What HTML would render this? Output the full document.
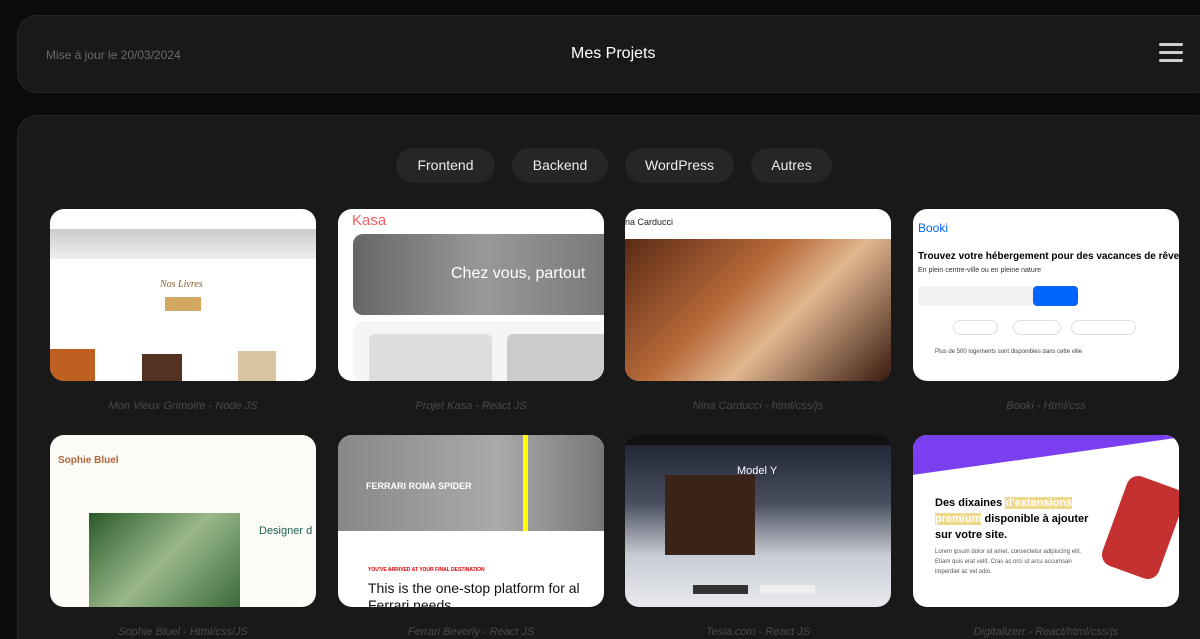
<!DOCTYPE html>
<html style="overflow:hidden;height:639px"><head><meta charset="utf-8"><style>
*{margin:0;padding:0;box-sizing:border-box}
body{width:1200px;height:639px;overflow:hidden;background:#0b0b0b;font-family:"Liberation Sans",sans-serif;position:relative}
.hdr{position:absolute;left:17px;top:15px;width:1200px;height:78px;background:#191919;border:1px solid #262626;border-radius:20px}
.hdr .d{position:absolute;left:28px;top:32px;color:#6a6a6a;font-size:12px}
.hdr .t{position:absolute;left:553px;top:29px;color:#fff;font-size:16px}
.burger{position:absolute;left:1159px;top:43px;width:24px}
.burger i{display:block;height:3px;background:#cfcfcf;border-radius:2px;margin-bottom:5px}
.main{position:absolute;left:17px;top:115px;width:1200px;height:540px;background:#191919;border:1px solid #262626;border-radius:20px}
.pill{position:absolute;top:148px;height:35px;background:#262626;border-radius:18px;color:#eee;font-size:14px;line-height:35px;text-align:center}
.card{position:absolute;width:266px;height:172px;border-radius:14px;overflow:hidden;background:#fff}
.cap{position:absolute;width:266px;text-align:center;color:#4a4a4a;font-size:11px;font-style:italic}
.a{position:absolute}
</style></head><body>
<div class="hdr"><div class="d">Mise à jour le 20/03/2024</div><div class="t">Mes Projets</div></div>
<div class="burger"><i></i><i></i><i></i></div>
<div class="main"></div>
<div class="pill" style="left:396px;width:99px">Frontend</div>
<div class="pill" style="left:512px;width:96px">Backend</div>
<div class="pill" style="left:625px;width:109px">WordPress</div>
<div class="pill" style="left:751px;width:81px">Autres</div>

<div class="card" style="left:50px;top:209px">
 <div class="a" style="top:20px;left:0;width:266px;height:30px;background:linear-gradient(#ccc,#eee)"></div>
 <div class="a" style="top:70px;left:110px;font-family:'Liberation Serif';font-style:italic;color:#8a5a2a;font-size:10px">Nos Livres</div>
 <div class="a" style="top:88px;left:115px;width:36px;height:14px;background:#d4a860"></div>
 <div class="a" style="top:140px;left:0;width:45px;height:32px;background:#c06020"></div>
 <div class="a" style="top:145px;left:92px;width:40px;height:27px;background:#553322"></div>
 <div class="a" style="top:142px;left:188px;width:38px;height:30px;background:#d8c4a0"></div>
</div>
<div class="cap" style="left:50px;top:400px">Mon Vieux Grimoire - Node JS</div>

<div class="card" style="left:338px;top:209px">
 <div class="a" style="top:3px;left:14px;color:#f06060;font-size:15px">Kasa</div>
 <div class="a" style="top:25px;left:15px;width:260px;height:81px;border-radius:10px;background:linear-gradient(90deg,#666,#999 50%,#777)"></div>
 <div class="a" style="top:56px;left:113px;color:#fff;font-size:16px">Chez vous, partout</div>
 <div class="a" style="top:112px;left:15px;width:260px;height:60px;background:#f5f5f5;border-radius:10px"></div>
 <div class="a" style="top:125px;left:31px;width:123px;height:50px;background:#ddd;border-radius:6px"></div>
 <div class="a" style="top:125px;left:169px;width:110px;height:50px;background:#ccc;border-radius:6px"></div>
</div>
<div class="cap" style="left:338px;top:400px">Projet Kasa - React JS</div>

<div class="card" style="left:625px;top:209px">
 <div class="a" style="top:8px;left:0;color:#222;font-size:9px">na Carducci</div>
 <div class="a" style="top:30px;left:0;width:266px;height:142px;background:linear-gradient(135deg,#5a2a14,#b86a3a 40%,#e0b890 60%,#3a1a10)"></div>
</div>
<div class="cap" style="left:625px;top:400px">Nina Carducci - html/css/js</div>

<div class="card" style="left:913px;top:209px">
 <div class="a" style="top:12px;left:5px;color:#0065fc;font-size:12px">Booki</div>
 <div class="a" style="top:42px;left:5px;color:#000;font-size:10px;font-weight:bold;white-space:nowrap">Trouvez votre hébergement pour des vacances de rêve</div>
 <div class="a" style="top:58px;left:5px;color:#333;font-size:7px">En plein centre-ville ou en pleine nature</div>
 <div class="a" style="top:77px;left:5px;width:115px;height:20px;background:#f2f2f2;border-radius:4px"></div>
 <div class="a" style="top:77px;left:120px;width:45px;height:20px;background:#0065fc;border-radius:4px"></div>
 <div class="a" style="top:111px;left:40px;width:45px;height:15px;border-radius:8px;border:1px solid #ddd"></div>
 <div class="a" style="top:111px;left:100px;width:48px;height:15px;border-radius:8px;border:1px solid #ddd"></div>
 <div class="a" style="top:111px;left:158px;width:65px;height:15px;border-radius:8px;border:1px solid #ddd"></div>
 <div class="a" style="top:140px;left:22px;color:#444;font-size:6px">Plus de 500 logements sont disponibles dans cette ville</div>
</div>
<div class="cap" style="left:913px;top:400px">Booki - Html/css</div>

<div class="card" style="left:50px;top:435px;background:#fcfbf6">
 <div class="a" style="top:20px;left:8px;color:#b1663c;font-size:10px;font-weight:bold">Sophie Bluel</div>
 <div class="a" style="top:78px;left:39px;width:151px;height:94px;background:linear-gradient(135deg,#2a5a2a,#9ab88a 50%,#3a6a3a)"></div>
 <div class="a" style="top:90px;left:209px;color:#1d6154;font-size:11px">Designer d</div>
</div>
<div class="cap" style="left:50px;top:626px">Sophie Bluel - Html/css/JS</div>

<div class="card" style="left:338px;top:435px">
 <div class="a" style="top:0;left:0;width:266px;height:96px;background:linear-gradient(90deg,#888,#aaa 60%,#777)"></div>
 <div class="a" style="top:0;left:185px;width:5px;height:96px;background:#ff0"></div>
 <div class="a" style="top:46px;left:28px;color:#fff;font-size:9px;font-weight:bold">FERRARI ROMA SPIDER</div>
 <div class="a" style="top:132px;left:30px;color:#d00;font-size:5px;font-weight:bold">YOU'VE ARRIVED AT YOUR FINAL DESTINATION</div>
 <div class="a" style="top:145px;left:30px;color:#111;font-size:14px;white-space:nowrap;line-height:17px">This is the one-stop platform for al<br>Ferrari needs</div>
</div>
<div class="cap" style="left:338px;top:626px">Ferrari Beverly - React JS</div>

<div class="card" style="left:625px;top:435px;background:linear-gradient(#1a2030,#4a5060 40%,#c8ccd4 70%,#e8eaee)">
 <div class="a" style="top:0;left:0;width:266px;height:10px;background:#111"></div>
 <div class="a" style="top:30px;left:112px;color:#fff;font-size:11px">Model Y</div>
 <div class="a" style="top:40px;left:40px;width:90px;height:80px;background:#3a2418"></div>
 <div class="a" style="top:150px;left:68px;width:55px;height:9px;background:#333"></div>
 <div class="a" style="top:150px;left:135px;width:55px;height:9px;background:#eee"></div>
</div>
<div class="cap" style="left:625px;top:626px">Tesla.com - React JS</div>

<div class="card" style="left:913px;top:435px">
 <div class="a" style="top:-30px;left:-20px;width:320px;height:50px;background:#7a40f0;transform:rotate(-8deg)"></div>
 <div class="a" style="top:60px;left:22px;color:#000;font-size:11px;font-weight:bold;line-height:16px;width:160px">Des dixaines <span style="background:#eed88a;color:#fff">d'extensions premium</span> disponible à ajouter sur votre site.</div>
 <div class="a" style="top:112px;left:22px;color:#555;font-size:6px;line-height:10px;width:160px">Lorem ipsum dolor sit amet, consectetur adipiscing elit. Etiam quis erat velit. Cras ac orci ut arcu accumsan imperdiet ac vel odio.</div>
 <div class="a" style="top:45px;left:200px;width:60px;height:95px;background:#c53030;border-radius:12px;transform:rotate(20deg)"></div>
</div>
<div class="cap" style="left:913px;top:626px">Digitalizerr - React/html/css/js</div>
</body></html>
